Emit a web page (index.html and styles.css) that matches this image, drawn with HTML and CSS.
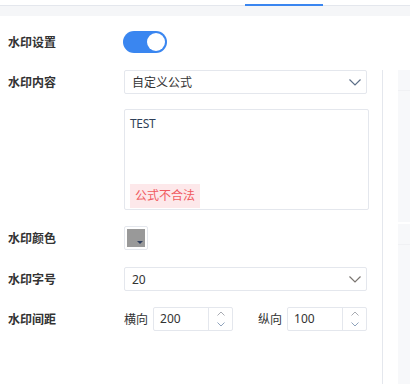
FILE: index.html
```html
<!DOCTYPE html>
<html lang="zh-CN">
<head>
    <meta charset="UTF-8">
    <meta name="viewport" content="width=device-width, initial-scale=1.0">
    <title>水印设置</title>
    <link rel="stylesheet" href="styles.css">
</head>
<body>
    <div class="tabs">
        <span class="tab active"></span>
    </div>
    <div class="band"></div>

    <div class="form-item switch-row">
        <span class="label">水印设置</span>
        <span class="switch on"><span class="knob"></span></span>
    </div>

    <div class="main">
        <div class="form">
            <div class="form-item">
                <span class="label">水印内容</span>
                <div class="control">
                    <div class="select">
                        <span>自定义公式</span>
                        <svg class="chevron" width="12" height="7" viewBox="0 0 12 7"><path d="M0.5 0.5 L6 6 L11.5 0.5" fill="none" stroke="#5c6f88" stroke-width="1.2"/></svg>
                    </div>
                    <div class="textarea">
                        <div class="formula">TEST</div>
                        <span class="error-tag">公式不合法</span>
                    </div>
                </div>
            </div>

            <div class="form-item">
                <span class="label">水印颜色</span>
                <div class="control">
                    <span class="color-picker">
                        <span class="swatch"><span class="caret"></span></span>
                    </span>
                </div>
            </div>

            <div class="form-item">
                <span class="label">水印字号</span>
                <div class="control">
                    <div class="select">
                        <span>20</span>
                        <svg class="chevron" width="12" height="7" viewBox="0 0 12 7"><path d="M0.5 0.5 L6 6 L11.5 0.5" fill="none" stroke="#7a7570" stroke-width="1.2"/></svg>
                    </div>
                </div>
            </div>

            <div class="form-item">
                <span class="label">水印间距</span>
                <div class="control spacing">
                    <span class="sub-label">横向</span>
                    <div class="number">
                        <span class="value">200</span>
                        <span class="steps">
                            <svg width="8" height="5" viewBox="0 0 8 5"><path d="M0.5 4.5 L4 1 L7.5 4.5" fill="none" stroke="#a8abb2" stroke-width="1"/></svg>
                            <svg width="8" height="5" viewBox="0 0 8 5"><path d="M0.5 0.5 L4 4 L7.5 0.5" fill="none" stroke="#8fa3bc" stroke-width="1"/></svg>
                        </span>
                    </div>
                    <span class="sub-label gap">纵向</span>
                    <div class="number">
                        <span class="value">100</span>
                        <span class="steps">
                            <svg width="8" height="5" viewBox="0 0 8 5"><path d="M0.5 4.5 L4 1 L7.5 4.5" fill="none" stroke="#a8abb2" stroke-width="1"/></svg>
                            <svg width="8" height="5" viewBox="0 0 8 5"><path d="M0.5 0.5 L4 4 L7.5 0.5" fill="none" stroke="#8fa3bc" stroke-width="1"/></svg>
                        </span>
                    </div>
                </div>
            </div>
        </div>

        <div class="preview">
            <div class="card"><div class="card-head"></div></div>
            <div class="card"><div class="card-head"></div></div>
        </div>
    </div>
</body>
</html>
```

FILE: styles.css
```css
body {
    margin: 0;
    padding: 0;
    background-color: #fff;
    font-family: "Noto Sans", "Noto Sans CJK SC", sans-serif;
    font-size: 12px;
    color: #333;
    overflow: hidden;
}

.tabs {
    height: 5px;
    border-bottom: 1px solid #e4e7ed;
    position: relative;
}

.tab.active {
    position: absolute;
    left: 245px;
    bottom: -1px;
    width: 78px;
    height: 2px;
    background-color: #3a86f0;
}

.band {
    height: 10px;
    background-color: #f5f6f8;
}

.form-item {
    display: grid;
    grid-template-columns: 116px 1fr;
    align-items: start;
    padding-left: 8px;
    margin-bottom: 16px;
}

.label {
    line-height: 23px;
    padding-top: 1px;
    font-weight: bold;
    color: #333;
}

.switch-row {
    margin-top: 14px;
    margin-bottom: 16px;
    align-items: center;
}

.switch {
    width: 44px;
    height: 22px;
    border-radius: 11px;
    background-color: #3a86f0;
    position: relative;
    margin-left: -1px;
}

.switch .knob {
    position: absolute;
    top: 2px;
    right: 2px;
    width: 18px;
    height: 18px;
    border-radius: 50%;
    background-color: #fff;
}

.main {
    display: flex;
    height: 314px;
}

.form {
    width: 383px;
    border-right: 1px solid #e4e7ed;
    padding-right: 15px;
    box-sizing: border-box;
}

.select {
    height: 24px;
    border: 1px solid #e4e7ed;
    border-radius: 2px;
    box-sizing: border-box;
    display: flex;
    align-items: center;
    justify-content: space-between;
    padding: 0 5px 0 7px;
    color: #333;
}

.select .chevron {
    margin-top: 1px;
}

.textarea {
    margin-top: 15px;
    margin-right: -2px;
    height: 101px;
    border: 1px solid #e4e7ed;
    border-radius: 2px;
    box-sizing: border-box;
    padding: 6px 5px 0 5px;
    display: flex;
    flex-direction: column;
    justify-content: space-between;
    align-items: flex-start;
}

.formula {
    color: #2e3f58;
    line-height: 16px;
    letter-spacing: -0.3px;
}

.error-tag {
    background-color: #fde8ea;
    color: #f05a5f;
    padding: 0 5px;
    line-height: 24px;
    margin-bottom: 1px;
}

.color-picker {
    display: inline-flex;
    width: 24px;
    height: 24px;
    border: 1px solid #e4e7ed;
    border-radius: 2px;
    box-sizing: border-box;
    padding: 2px;
}

.swatch {
    flex: 1;
    background-color: #999;
    position: relative;
}

.swatch .caret {
    position: absolute;
    right: 2px;
    bottom: 3px;
    border-left: 3px solid transparent;
    border-right: 3px solid transparent;
    border-top: 3px solid #2f3f5f;
}

.spacing {
    display: flex;
    align-items: center;
}

.sub-label {
    margin-right: 5px;
    color: #333;
}

.sub-label.gap {
    margin-left: 25px;
}

.number {
    width: 80px;
    height: 24px;
    border: 1px solid #e4e7ed;
    border-radius: 2px;
    box-sizing: border-box;
    display: flex;
}

.number .value {
    flex: 1;
    line-height: 22px;
    padding-left: 6px;
    color: #333;
}

.number .steps {
    width: 23px;
    border-left: 1px solid #e4e7ed;
    display: flex;
    flex-direction: column;
    align-items: center;
    justify-content: center;
    gap: 6px;
}

.number .steps svg {
    display: block;
}

.preview {
    margin-left: 15px;
    flex: 1;
    display: flex;
    flex-direction: column;
    gap: 2px;
}

.card {
    background-color: #f7f8fa;
    height: 152px;
}

.card + .card {
    flex: 1;
}

.card-head {
    height: 20px;
    border-bottom: 1px solid #f0f1f4;
}
```
